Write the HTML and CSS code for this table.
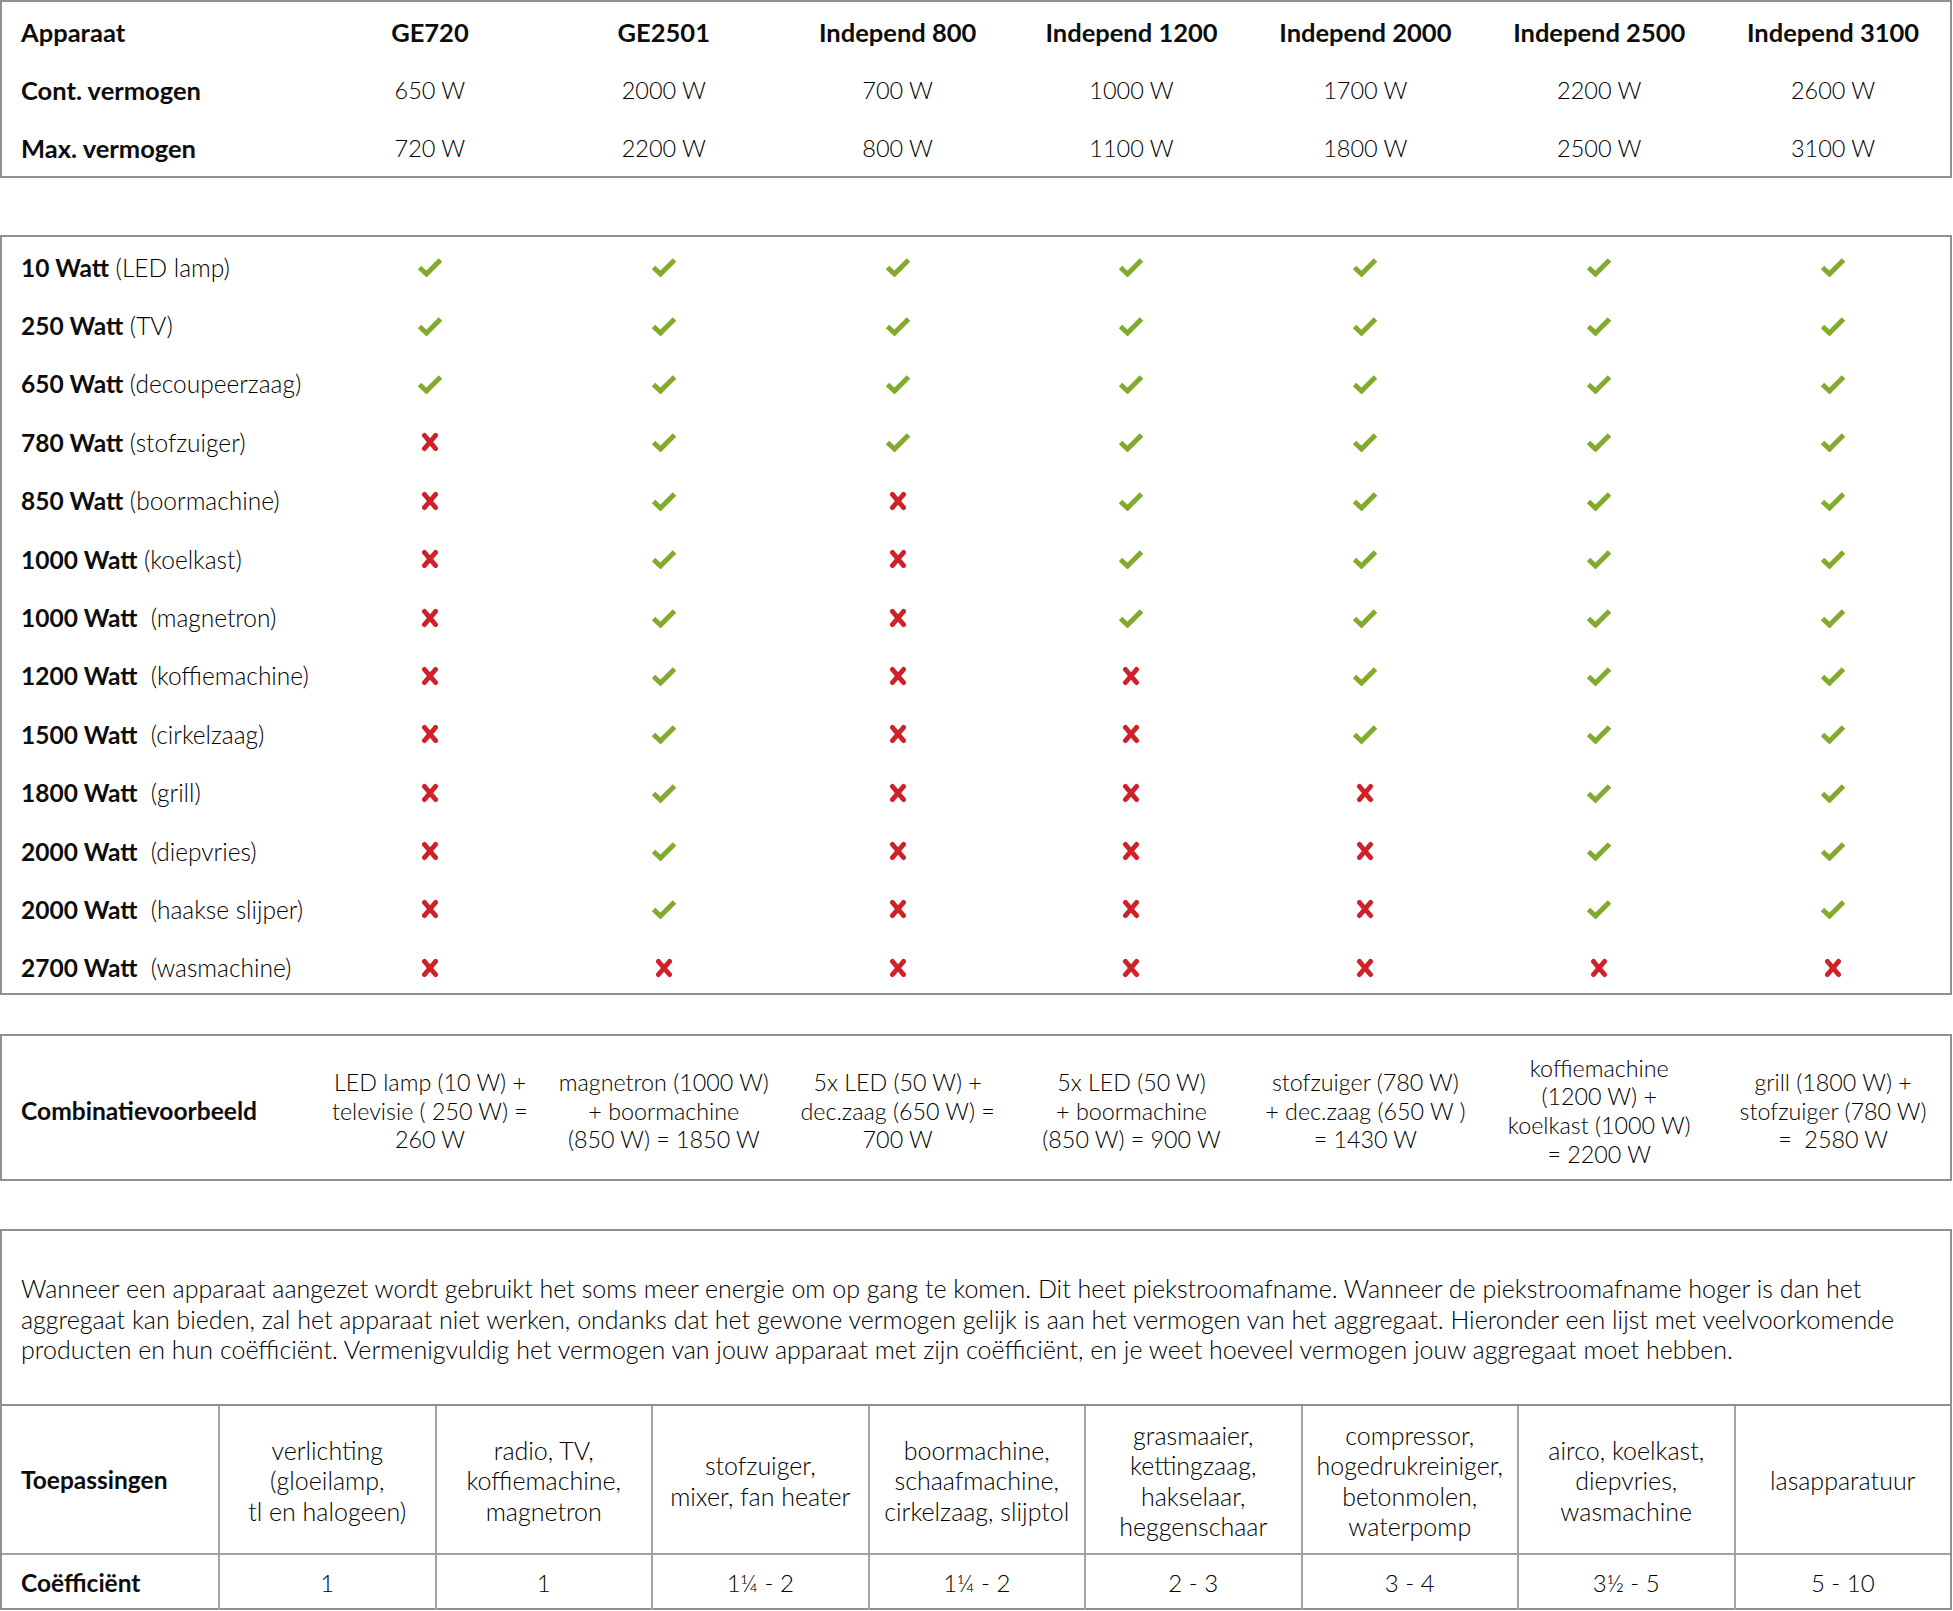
FILE: index.html
```html
<!DOCTYPE html>
<html lang="nl">
<head>
<meta charset="utf-8">
<title>Vergelijking aggregaten</title>
<link rel="stylesheet" href="styles.css">
</head>
<body>
<svg class="defs" width="0" height="0" aria-hidden="true">
  <symbol id="chk" viewBox="0 0 26 20"><polyline points="2.5,10.5 9.5,17 23.5,3" fill="none" stroke="#82aa2c" stroke-width="5"/></symbol>
  <symbol id="crs" viewBox="0 0 18 20"><path d="M3.5 3.5 L14.5 16.5 M14.5 3.5 L3.5 16.5" fill="none" stroke="#cf2129" stroke-width="5" stroke-linecap="round"/></symbol>
</svg>
<div class="page">

  <div class="box specs">
    <div class="lbl b">Apparaat</div>
    <div class="c b">GE720</div><div class="c b">GE2501</div><div class="c b">Independ 800</div><div class="c b">Independ 1200</div><div class="c b">Independ 2000</div><div class="c b">Independ 2500</div><div class="c b">Independ 3100</div>
    <div class="lbl b">Cont. vermogen</div>
    <div class="c">650 W</div><div class="c">2000 W</div><div class="c">700 W</div><div class="c">1000 W</div><div class="c">1700 W</div><div class="c">2200 W</div><div class="c">2600 W</div>
    <div class="lbl b">Max. vermogen</div>
    <div class="c">720 W</div><div class="c">2200 W</div><div class="c">800 W</div><div class="c">1100 W</div><div class="c">1800 W</div><div class="c">2500 W</div><div class="c">3100 W</div>
  </div>

  <div class="box checks" id="checks"></div>

  <div class="box combo">
    <div class="lbl b">Combinatievoorbeeld</div>
    <div class="c">LED lamp (10 W) +<br>televisie ( 250 W) =<br>260 W</div>
    <div class="c">magnetron (1000 W)<br>+ boormachine<br>(850 W) = 1850 W</div>
    <div class="c">5x LED (50 W) +<br>dec.zaag (650 W) =<br>700 W</div>
    <div class="c">5x LED (50 W)<br>+ boormachine<br>(850 W) = 900 W</div>
    <div class="c">stofzuiger (780 W)<br>+ dec.zaag (650 W )<br>= 1430 W</div>
    <div class="c">koffiemachine<br>(1200 W) +<br>koelkast (1000 W)<br>= 2200 W</div>
    <div class="c">grill (1800 W) +<br>stofzuiger (780 W)<br>=&nbsp; 2580 W</div>
  </div>

  <div class="box coef">
    <p class="intro">Wanneer een apparaat aangezet wordt gebruikt het soms meer energie om op gang te komen. Dit heet piekstroomafname. Wanneer de piekstroomafname hoger is dan het<br>aggregaat kan bieden, zal het apparaat niet werken, ondanks dat het gewone vermogen gelijk is aan het vermogen van het aggregaat. Hieronder een lijst met veelvoorkomende<br>producten en hun coëfficiënt. Vermenigvuldig het vermogen van jouw apparaat met zijn coëfficiënt, en je weet hoeveel vermogen jouw aggregaat moet hebben.</p>
    <div class="cgrid">
      <div class="clbl b">Toepassingen</div>
      <div class="cc">verlichting<br>(gloeilamp,<br>tl en halogeen)</div>
      <div class="cc">radio, TV,<br>koffiemachine,<br>magnetron</div>
      <div class="cc">stofzuiger,<br>mixer, fan heater</div>
      <div class="cc">boormachine,<br>schaafmachine,<br>cirkelzaag, slijptol</div>
      <div class="cc">grasmaaier,<br>kettingzaag,<br>hakselaar,<br>heggenschaar</div>
      <div class="cc">compressor,<br>hogedrukreiniger,<br>betonmolen,<br>waterpomp</div>
      <div class="cc">airco, koelkast,<br>diepvries,<br>wasmachine</div>
      <div class="cc">lasapparatuur</div>
      <div class="clbl b low">Coëfficiënt</div>
      <div class="cc low num">1</div>
      <div class="cc low num">1</div>
      <div class="cc low num">1¼ - 2</div>
      <div class="cc low num">1¼ - 2</div>
      <div class="cc low num">2 - 3</div>
      <div class="cc low num">3 - 4</div>
      <div class="cc low num">3½ - 5</div>
      <div class="cc low num">5 - 10</div>
    </div>
  </div>
</div>
<script>
(function(){
  var rows = [
    ["10 Watt"," (LED lamp)","1111111"],
    ["250 Watt"," (TV)","1111111"],
    ["650 Watt"," (decoupeerzaag)","1111111"],
    ["780 Watt"," (stofzuiger)","0111111"],
    ["850 Watt"," (boormachine)","0101111"],
    ["1000 Watt"," (koelkast)","0101111"],
    ["1000 Watt","\u00a0 (magnetron)","0101111"],
    ["1200 Watt","\u00a0 (koffiemachine)","0100111"],
    ["1500 Watt","\u00a0 (cirkelzaag)","0100111"],
    ["1800 Watt","\u00a0 (grill)","0100011"],
    ["2000 Watt","\u00a0 (diepvries)","0100011"],
    ["2000 Watt","\u00a0 (haakse slijper)","0100011"],
    ["2700 Watt","\u00a0 (wasmachine)","0000000"]
  ];
  var el = document.getElementById('checks');
  var html = '';
  rows.forEach(function(r){
    html += '<div class="lbl"><b>'+r[0]+'</b>'+r[1]+'</div>';
    for (var i=0;i<7;i++){
      var ok = r[2].charAt(i)==='1';
      html += ok
        ? '<div class="c ico"><svg class="ic chk"><use href="#chk"/></svg></div>'
        : '<div class="c ico"><svg class="ic crs"><use href="#crs"/></svg></div>';
    }
  });
  el.innerHTML = html;
})();
</script>
</body>
</html>
```
FILE: styles.css
```css
html, body {
  margin: 0;
  padding: 0;
  background: #ffffff;
}
body {
  font-family: "Lato", "Liberation Sans", sans-serif;
  font-weight: 300;
  color: #000000;
  font-size: 22px;
  width: 1953px;
}
.defs { position: absolute; width: 0; height: 0; overflow: hidden; }
.page {
  display: flex;
  flex-direction: column;
  width: 1952px;
}
.box {
  border: 2px solid #8f8f8f;
  box-sizing: border-box;
  width: 1952px;
}
.b, b { font-weight: 700; color: #0d0d0d; }

.specs, .checks, .combo {
  display: grid;
  grid-template-columns: 311px repeat(7, 1fr);
  align-items: center;
}
.specs {
  grid-auto-rows: 58px;
  height: 178px;
  padding-top: 1px;
  font-size: 23.5px;
}
.specs .b { font-size: 25.5px; }

.checks {
  grid-auto-rows: 58.4px;
  height: 760px;
  padding-top: 1px;
  margin-top: 57px;
  font-size: 24.5px;
}
.combo {
  margin-top: 39px;
  height: 147px;
  padding-top: 7px;
  line-height: 28.6px;
  font-size: 23.3px;
}
.combo .lbl { font-size: 24.6px; }

.lbl {
  padding-left: 19px;
  white-space: nowrap;
}
.c {
  text-align: center;
  white-space: nowrap;
}
.ico {
  display: flex;
  justify-content: center;
  align-items: center;
  height: 100%;
}
.ic { display: block; }
.chk { width: 26px; height: 20px; }
.crs { width: 18px; height: 20px; }

.coef { margin-top: 48px; height: 381px; }
.intro {
  margin: 0;
  height: 173px;
  box-sizing: border-box;
  padding: 42px 19px 0;
  line-height: 30.5px;
  font-size: 25px;
  white-space: nowrap;
}
.cgrid {
  display: grid;
  grid-template-columns: 216px repeat(8, 1fr);
  grid-template-rows: 147px 57px;
  border-top: 2px solid #8f8f8f;
  font-size: 25px;
}
.clbl, .cc {
  display: flex;
  align-items: center;
  line-height: 30.5px;
  padding-top: 2px;
  box-sizing: border-box;
}
.clbl { padding-left: 19px; font-size: 24.5px; }
.cc {
  justify-content: center;
  text-align: center;
  border-left: 2px solid #a3a3a3;
}
.low { border-top: 2px solid #a3a3a3; }
.num { font-size: 24px; }
```
